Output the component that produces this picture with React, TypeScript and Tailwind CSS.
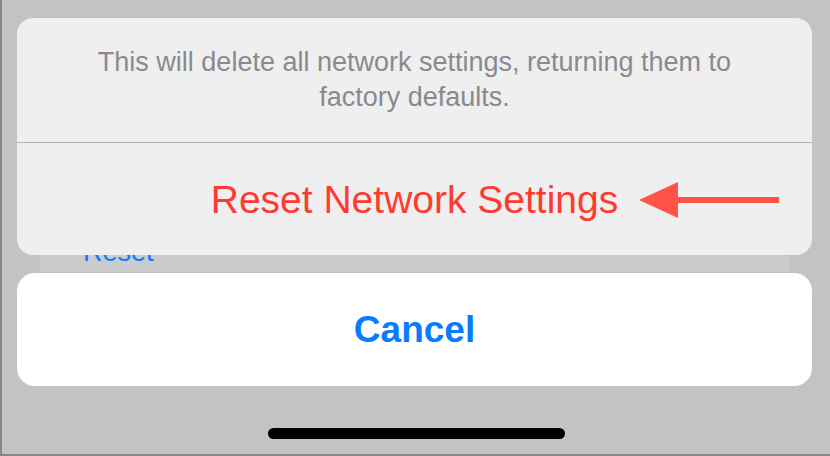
export default function App() {
  return (
    <div
      className="relative w-[830px] h-[456px] overflow-hidden bg-[#c3c3c5] border-l-2 border-b-2 border-[#87878a]"
      style={{ fontFamily: '"Liberation Sans", Arial, sans-serif' }}
    >
      <div className="flex flex-col pt-[18px] pl-[15px] pr-[18px]">
        {/* ACTION SHEET */}
        <div className="relative z-10 flex flex-col rounded-[16px] bg-[#efeff0]">
          <div className="h-[124px] flex items-center justify-center text-center text-[27px] leading-[35px] text-[#8a8a8e]">
            <p>
              This will delete all network settings, returning them to
              <br />
              factory defaults.
            </p>
          </div>
          <div className="h-px bg-[#b4b4b7]" />
          <div className="relative h-[112px] flex items-center justify-center">
            <span className="text-[39px] leading-none text-[#ff3b30]">Reset Network Settings</span>
            <svg
              className="absolute left-[622px] top-[39px]"
              width="141"
              height="37"
              viewBox="0 0 141 37"
            >
              <polygon points="0,18 39,0 39,36" fill="#ff5347" />
              <rect x="38" y="15" width="102" height="6" fill="#ff5347" />
            </svg>
          </div>
        </div>

        {/* list underneath, mostly hidden */}
        <div className="h-[17px] mx-[23px] overflow-hidden bg-[#cbcbcd]">
          <div className="-mt-[16px] pl-[43px] text-[27px] leading-none text-[#0a7aff]">Reset</div>
        </div>

        {/* CANCEL */}
        <div className="mt-px h-[113px] flex items-center justify-center rounded-[18px] bg-white">
          <span className="text-[37px] leading-none font-bold text-[#0a7aff]">Cancel</span>
        </div>

        {/* HOME INDICATOR */}
        <div className="mt-[42px] flex justify-center">
          <div className="w-[297px] h-[11px] rounded-full bg-black ml-[3px]" />
        </div>
      </div>
    </div>
  );
}
